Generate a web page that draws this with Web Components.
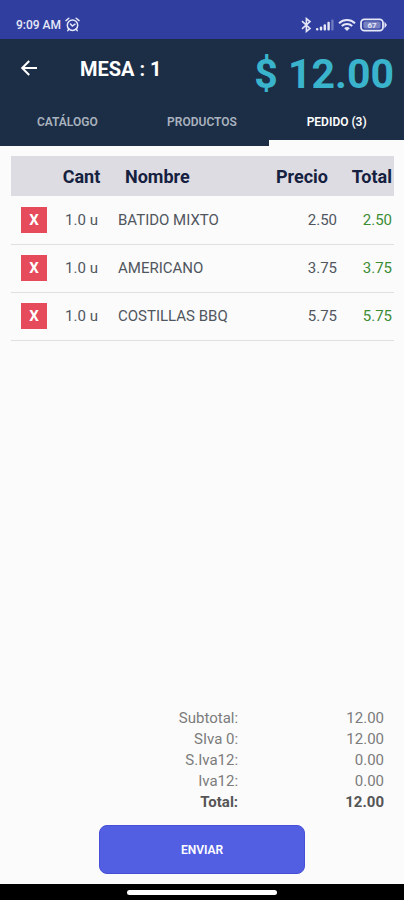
<!DOCTYPE html>
<html lang="es">
<head>
<meta charset="utf-8">
<meta name="viewport" content="width=device-width, initial-scale=1">
<title>Mesa : 1</title>
<style>
    body {
        margin: 0;
        font-family: Roboto, "Liberation Sans", sans-serif;
        background: #fbfbfb;
    }
</style>
</head>
<body>

<order-screen>
    <status-bar slot="status" time="9:09 AM" battery="67"></status-bar>
    <order-header slot="header">
        <span slot="title">MESA : 1</span>
        <span slot="amount">$ 12.00</span>
        <order-tab slot="tabs">CATÁLOGO</order-tab>
        <order-tab slot="tabs">PRODUCTOS</order-tab>
        <order-tab slot="tabs" active>PEDIDO (3)</order-tab>
    </order-header>
    <order-table></order-table>
    <order-summary slot="footer"></order-summary>
    <send-button slot="footer">ENVIAR</send-button>
</order-screen>

<template id="order-screen-template">
    <style>
        :host {
            display: flex;
            flex-direction: column;
            min-height: 100vh;
        }
        main {
            flex: 1;
            padding: 10px 10px 0 11px;
        }
        footer {
            display: flex;
            flex-direction: column;
            gap: 12px;
            padding-bottom: 10px;
        }
        .gesture {
            display: flex;
            justify-content: center;
            box-sizing: border-box;
            height: 16px;
            padding-top: 6px;
            background: #000;
        }
        .gesture span {
            width: 37%;
            height: 5px;
            border-radius: 3px;
            background: #fff;
        }
    </style>
    <slot name="status"></slot>
    <slot name="header"></slot>
    <main><slot></slot></main>
    <footer><slot name="footer"></slot></footer>
    <div class="gesture"><span></span></div>
</template>

<template id="status-bar-template">
    <style>
        :host {
            display: flex;
            align-items: center;
            justify-content: space-between;
            box-sizing: border-box;
            height: 39px;
            padding: 10px 17px 0 16px;
            background: #303f9f;
            color: #e6e8f8;
            font-size: 12px;
            font-weight: 500;
        }
        div {
            display: flex;
            align-items: center;
            gap: 4px;
        }
        svg { display: block; }
        text { font: bold 8px Roboto, sans-serif; }
    </style>
    <div>
        <span class="time"></span>
        <svg width="15" height="15" viewBox="0 0 15 15" fill="none" stroke="currentColor" stroke-width="1.5" stroke-linecap="round">
            <circle cx="7.5" cy="8.2" r="5.2"/>
            <path d="M1 3.6 3.8 1.2M14 3.6 11.2 1.2M5.5 7 7.3 9 10 7.2M3.8 12.2 2.8 13.6M11.2 12.2l1 1.4"/>
        </svg>
    </div>
    <div>
        <svg width="11" height="16" viewBox="0 0 11 16" fill="none" stroke="currentColor" stroke-width="1.6">
            <path d="M1 4.2 9 11.4 5.4 14.4V1.6L9 4.6 1 11.8"/>
        </svg>
        <svg width="18" height="13" viewBox="0 0 18 13" fill="currentColor">
            <rect x="0" y="10" width="2.4" height="2.4" rx="1"/>
            <rect x="3.8" y="8.4" width="2.4" height="4" rx="1"/>
            <rect x="7.6" y="6.2" width="2.4" height="6.2" rx="1"/>
            <rect x="11.4" y="3.8" width="2.4" height="8.6" rx="1"/>
            <rect x="15.2" y="1.4" width="2.4" height="11" rx="1" opacity=".35"/>
        </svg>
        <svg width="18" height="14" viewBox="0 0 18 14" fill="none" stroke="currentColor" stroke-width="2">
            <path d="M1 5.2C5.6 1 12.4 1 17 5.2M3.8 8c3-2.8 7.4-2.8 10.4 0"/>
            <path d="M6.2 10.2c1.6-1.5 4-1.5 5.6 0L9 13z" fill="currentColor" stroke="none"/>
        </svg>
        <svg width="27" height="14" viewBox="0 0 27 14" fill="none" stroke="currentColor">
            <rect x="1" y="1.4" width="22" height="11.2" rx="3.4" stroke-width="1.8"/>
            <path d="M24.8 4.4v5.2l1.8-2.6z" fill="currentColor" stroke-width=".6"/>
            <rect x="3.4" y="3.6" width="17.2" height="6.8" rx="1.6" fill="currentColor" stroke="none" opacity=".4"/>
            <text class="battery" x="12" y="10" text-anchor="middle" fill="currentColor" stroke="none"></text>
        </svg>
    </div>
</template>

<template id="order-header-template">
    <style>
        :host {
            display: block;
            background: #1c2e46;
            color: #fff;
        }
        .bar {
            display: flex;
            align-items: center;
            height: 59px;
            padding: 0 10px 0 20px;
        }
        button {
            width: 18px;
            height: 18px;
            padding: 0;
            border: 0;
            background: none;
            color: inherit;
        }
        svg { display: block; }
        h1 {
            flex: 1;
            margin: 0 0 0 42px;
            font-size: 20px;
            font-weight: 700;
        }
        .amount {
            padding-top: 10px;
            color: #3ab4cc;
            font-size: 41px;
            font-weight: 700;
            white-space: nowrap;
        }
        nav {
            display: grid;
            grid-template-columns: repeat(3, 1fr);
            height: 48px;
        }
    </style>
    <div class="bar">
        <button type="button" aria-label="Volver">
            <svg width="18" height="18" viewBox="0 0 18 18" fill="none" stroke="currentColor" stroke-width="2">
                <path d="M17 8H2.6M9.2 1 2.2 8l7 7"/>
            </svg>
        </button>
        <h1><slot name="title"></slot></h1>
        <div class="amount"><slot name="amount"></slot></div>
    </div>
    <nav><slot name="tabs"></slot></nav>
</template>

<template id="order-tab-template">
    <style>
        :host { display: grid; }
        a {
            display: flex;
            align-items: center;
            justify-content: center;
            box-sizing: border-box;
            border-bottom: 6px solid transparent;
            padding-top: 6px;
            color: #a9b2be;
            font-size: 12px;
            font-weight: 600;
            text-decoration: none;
        }
        :host([active]) a {
            border-color: #fbfbfb;
            color: #fff;
        }
    </style>
    <a href="#"><slot></slot></a>
</template>

<template id="order-table-template">
    <style>
        :host { display: block; }
        table {
            width: 100%;
            border-collapse: collapse;
            table-layout: fixed;
            font-size: 15px;
            color: #50565e;
        }
        th, td {
            box-sizing: border-box;
            padding: 0;
            text-align: left;
            white-space: nowrap;
        }
        th {
            height: 40px;
            background: #dddce2;
            color: #15213f;
            font-size: 18px;
            font-weight: 700;
        }
        td {
            height: 48px;
            border-bottom: 1px solid #dfdfdf;
        }
        .remove { width: 46px; padding-left: 10px; }
        .qty { width: 61px; padding-right: 12px; text-align: center; }
        th.name { padding-left: 7px; }
        .price { width: 66px; text-align: right; }
        th.price { padding-right: 9px; }
        .total { width: 57px; padding-right: 2px; text-align: right; }
        td.total { color: #3c8c34; }
        button {
            display: block;
            width: 26px;
            height: 26px;
            padding: 0;
            border: 0;
            background: #e54b5b;
            color: #fff;
            font: 700 15px Roboto, sans-serif;
        }
    </style>
    <table>
        <thead>
            <tr>
                <th class="remove"></th>
                <th class="qty">Cant</th>
                <th class="name">Nombre</th>
                <th class="price">Precio</th>
                <th class="total">Total</th>
            </tr>
        </thead>
        <tbody></tbody>
    </table>
</template>

<template id="order-summary-template">
    <style>
        :host { display: block; padding-right: 20px; }
        table {
            width: 100%;
            border-collapse: collapse;
            color: #7c7c7c;
            font-size: 15px;
            line-height: 21px;
        }
        th, td {
            padding: 0;
            font-weight: 400;
            text-align: right;
        }
        th { width: 62%; }
        tr:last-child > * {
            color: #555;
            font-weight: 700;
        }
    </style>
    <table><tbody></tbody></table>
</template>

<template id="send-button-template">
    <style>
        :host {
            display: flex;
            justify-content: center;
        }
        button {
            width: 51%;
            height: 49px;
            border: 1px solid #474fd6;
            border-radius: 8px;
            background: #535fe3;
            color: #fff;
            font: 600 12px Roboto, sans-serif;
        }
    </style>
    <button type="button"><slot></slot></button>
</template>

<script>
    class BaseElement extends HTMLElement {
        constructor() {
            super()
            const template = document.getElementById(this.localName + "-template")
            this.attachShadow({ mode: "open" }).appendChild(template.content.cloneNode(true))
        }
    }

    class OrderScreen extends BaseElement {}
    class OrderHeader extends BaseElement {}
    class OrderTab extends BaseElement {}
    class SendButton extends BaseElement {}

    class StatusBar extends BaseElement {
        connectedCallback() {
            this.shadowRoot.querySelector(".time").textContent = this.getAttribute("time")
            this.shadowRoot.querySelector(".battery").textContent = this.getAttribute("battery")
        }
    }

    const items = [
        { name: "BATIDO MIXTO", qty: 1, price: 2.5 },
        { name: "AMERICANO", qty: 1, price: 3.75 },
        { name: "COSTILLAS BBQ", qty: 1, price: 5.75 },
    ]

    class OrderTable extends BaseElement {
        connectedCallback() {
            this.shadowRoot.querySelector("tbody").innerHTML = items.map((item) => `
                <tr>
                    <td class="remove"><button type="button" aria-label="Quitar ${item.name}">X</button></td>
                    <td class="qty">${item.qty.toFixed(1)} u</td>
                    <td class="name">${item.name}</td>
                    <td class="price">${item.price.toFixed(2)}</td>
                    <td class="total">${(item.qty * item.price).toFixed(2)}</td>
                </tr>`).join("")
        }
    }

    class OrderSummary extends BaseElement {
        connectedCallback() {
            const total = items.reduce((sum, item) => sum + item.qty * item.price, 0)
            const lines = [
                ["Subtotal:", total],
                ["SIva 0:", total],
                ["S.Iva12:", 0],
                ["Iva12:", 0],
                ["Total:", total],
            ]
            this.shadowRoot.querySelector("tbody").innerHTML = lines.map(([label, value]) => `
                <tr><th scope="row">${label}</th><td>${value.toFixed(2)}</td></tr>`).join("")
        }
    }

    customElements.define("order-screen", OrderScreen)
    customElements.define("status-bar", StatusBar)
    customElements.define("order-header", OrderHeader)
    customElements.define("order-tab", OrderTab)
    customElements.define("order-table", OrderTable)
    customElements.define("order-summary", OrderSummary)
    customElements.define("send-button", SendButton)
</script>
</body>
</html>
